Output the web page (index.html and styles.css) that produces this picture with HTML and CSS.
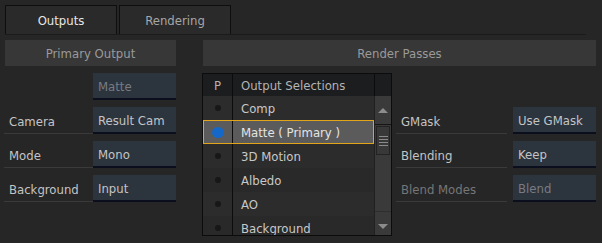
FILE: index.html
```html
<!DOCTYPE html>
<html lang="en">
<head>
    <meta charset="UTF-8">
    <title>Outputs</title>
    <link rel="stylesheet" href="styles.css">
</head>
<body>

    <!-- Tabs -->
    <div class="tab-bar">
        <div class="tab active">Outputs</div>
        <div class="tab">Rendering</div>
    </div>

    <div class="panels">

        <!-- Primary Output -->
        <div class="primary-col">
            <div class="section-title">Primary Output</div>
            <div class="prop-rows">
                <div class="prop-row">
                    <div class="prop-label blank"></div>
                    <div class="field disabled">Matte</div>
                </div>
                <div class="prop-row">
                    <div class="prop-label">Camera</div>
                    <div class="field">Result Cam</div>
                </div>
                <div class="prop-row">
                    <div class="prop-label">Mode</div>
                    <div class="field">Mono</div>
                </div>
                <div class="prop-row">
                    <div class="prop-label">Background</div>
                    <div class="field">Input</div>
                </div>
            </div>
        </div>

        <!-- Render Passes -->
        <div class="passes-col">
            <div class="section-title">Render Passes</div>
            <div class="passes-body">

                <div class="pass-list">
                    <div class="list-head">
                        <div class="p-cell">P</div>
                        <div class="name-cell">Output Selections</div>
                        <div class="scroll-head"></div>
                    </div>
                    <div class="list-main">
                        <div class="list-rows">
                            <div class="list-row"><div class="p-cell"><span class="dot"></span></div><div class="name-cell">Comp</div></div>
                            <div class="list-row selected"><div class="p-cell"><span class="dot primary"></span></div><div class="name-cell">Matte ( Primary )</div></div>
                            <div class="list-row"><div class="p-cell"><span class="dot"></span></div><div class="name-cell">3D Motion</div></div>
                            <div class="list-row"><div class="p-cell"><span class="dot"></span></div><div class="name-cell">Albedo</div></div>
                            <div class="list-row"><div class="p-cell"><span class="dot"></span></div><div class="name-cell">AO</div></div>
                            <div class="list-row"><div class="p-cell"><span class="dot"></span></div><div class="name-cell">Background</div></div>
                        </div>
                        <div class="scrollbar">
                            <div class="scroll-btn"><span class="arrow up"></span></div>
                            <div class="scroll-track">
                                <div class="thumb">
                                    <span></span><span></span><span></span><span></span>
                                </div>
                            </div>
                            <div class="scroll-btn down"><span class="arrow dn"></span></div>
                        </div>
                    </div>
                </div>

                <div class="prop-rows side-props">
                    <div class="prop-row">
                        <div class="prop-label">GMask</div>
                        <div class="field">Use GMask</div>
                    </div>
                    <div class="prop-row">
                        <div class="prop-label">Blending</div>
                        <div class="field">Keep</div>
                    </div>
                    <div class="prop-row">
                        <div class="prop-label disabled">Blend Modes</div>
                        <div class="field disabled">Blend</div>
                    </div>
                </div>

            </div>
        </div>

    </div>

</body>
</html>
```

FILE: styles.css
```css
body {
    margin: 0;
    padding: 5px 0 0 5px;
    width: 602px;
    height: 243px;
    box-sizing: border-box;
    background-color: #262626;
    font-family: "DejaVu Sans Condensed", "Liberation Sans", sans-serif;
    font-size: 13px;
    color: #c4c4c4;
    overflow: hidden;
}

/* tabs */
.tab-bar {
    display: flex;
    gap: 2px;
    width: 581px;
    height: 29px;
    border-bottom: 1px solid #1b1b1b;
}

.tab {
    width: 112px;
    height: 29px;
    box-sizing: border-box;
    border: 1px solid #0e0e0e;
    border-bottom: none;
    background-color: #2a2a2a;
    color: #a6a6a6;
    display: flex;
    align-items: center;
    justify-content: center;
}

.tab.active {
    color: #e6e6e6;
}

.panels {
    display: flex;
    gap: 27px;
    margin-top: 5px;
}

.section-title {
    height: 26px;
    background-color: #373737;
    color: #9a9a9a;
    display: flex;
    align-items: center;
    justify-content: center;
}

.primary-col {
    width: 171px;
}

.passes-col {
    width: 393px;
}

/* property rows */
.prop-rows {
    display: flex;
    flex-direction: column;
    gap: 7px;
    padding-top: 7px;
}

.prop-row {
    display: flex;
    height: 27px;
}

.prop-label {
    width: 89px;
    margin-left: -1px;
    padding-left: 5px;
    box-sizing: border-box;
    border-bottom: 1px solid #3a3a3a;
    display: flex;
    align-items: center;
    padding-top: 2px;
}

.prop-label.blank {
    border-bottom: none;
}

.prop-label.disabled {
    color: #767676;
}

.field {
    width: 83px;
    box-sizing: border-box;
    background-color: #2c343e;
    border-bottom: 2px solid #0b0e1c;
    padding: 2px 0 0 5px;
    display: flex;
    align-items: center;
}

.field.disabled {
    color: #787c82;
}

.side-props {
    padding-top: 41px;
    margin-left: 4px;
}

.side-props .prop-label {
    width: 111px;
    margin-left: 0;
    margin-right: 6px;
}

/* render passes list */
.passes-body {
    display: flex;
}

.pass-list {
    width: 192px;
    height: 163px;
    margin: 7px 0 0 -1px;
    box-sizing: border-box;
    border: 1px solid #0c0c0c;
    display: flex;
    flex-direction: column;
    overflow: hidden;
}

.list-head {
    display: flex;
    height: 22px;
    flex-shrink: 0;
    background-color: #1b1d1f;
    color: #b4b4b4;
}

.p-cell {
    width: 30px;
    box-sizing: border-box;
    border-right: 1px solid #0c0c0c;
    display: flex;
    align-items: center;
    justify-content: center;
}

.name-cell {
    flex: 1;
    padding-left: 8px;
    display: flex;
    align-items: center;
}

.scroll-head {
    width: 17px;
    box-sizing: border-box;
    border-left: 1px solid #0c0c0c;
}

.list-main {
    display: flex;
    flex: 1;
}

.list-rows {
    flex: 1;
}

.list-row {
    display: flex;
    height: 24px;
    background-color: #2c2c2c;
    color: #c8c8c8;
}

.list-row:nth-child(even) {
    background-color: #292929;
}

.list-row.selected {
    background-color: #5b5b5b;
    color: #e4e4e4;
    outline: 1px solid #e2a51a;
    outline-offset: -1px;
}

.dot {
    width: 6px;
    height: 6px;
    border-radius: 50%;
    background-color: #171717;
}

.dot.primary {
    width: 12px;
    height: 11px;
    background-color: #1668c8;
}

/* scrollbar */
.scrollbar {
    width: 17px;
    box-sizing: border-box;
    border-left: 1px solid #202020;
    background-color: #3a3a3a;
    display: flex;
    flex-direction: column;
}

.scroll-btn {
    height: 28px;
    border-bottom: 1px solid #151515;
    display: flex;
    align-items: center;
    justify-content: center;
}

.scroll-btn.down {
    border-bottom: none;
    border-top: 1px solid #2e2e2e;
}

.arrow {
    width: 0;
    height: 0;
    border-left: 5px solid transparent;
    border-right: 5px solid transparent;
}

.arrow.up {
    border-bottom: 5px solid #8c8c8c;
}

.arrow.dn {
    border-top: 5px solid #8c8c8c;
}

.scroll-track {
    flex: 1;
    padding: 1px 1px 0 1px;
}

.thumb {
    height: 29px;
    box-sizing: border-box;
    border: 1px solid #232323;
    background-color: #383838;
    display: flex;
    flex-direction: column;
    align-items: center;
    justify-content: center;
    gap: 2px;
}

.thumb span {
    width: 9px;
    height: 1px;
    background-color: #8a8a8a;
}
```
